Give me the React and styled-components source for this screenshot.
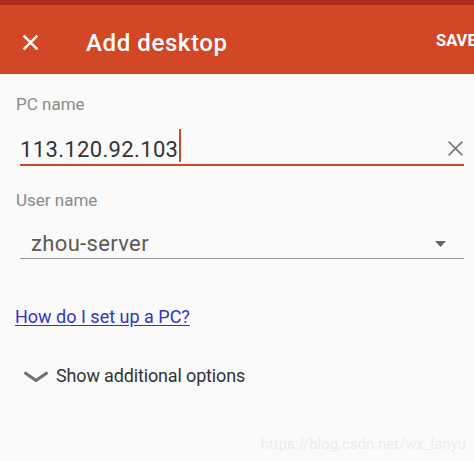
import React from "react";
import styled, { createGlobalStyle } from "styled-components";

const GlobalStyle = createGlobalStyle`
  html, body {
    margin: 0;
    padding: 0;
    background: #fafafa;
    font-family: Roboto, "Liberation Sans", Arial, sans-serif;
  }
`;

const Screen = styled.div`
  position: relative;
  width: 474px;
  height: 461px;
  overflow: hidden;
  background: #fafafa;
  display: flex;
  flex-direction: column;
`;

const StatusStrip = styled.div`
  height: 5px;
  background: #ad2d1c;
`;

const AppBar = styled.header`
  height: 69px;
  box-sizing: border-box;
  padding: 6px 0 0 22px;
  background: #d24726;
  display: flex;
  align-items: center;
  color: #fff;
`;

const IconButton = styled.button`
  border: 0;
  background: none;
  padding: 0;
  margin: 0 47px 0 0;
  display: flex;
  color: inherit;
  cursor: pointer;
  svg {
    display: block;
  }
`;

const Title = styled.h1`
  flex: 1;
  margin: 0;
  font-size: 24px;
  line-height: 28px;
  font-weight: 500;
  letter-spacing: 0.6px;
`;

const SaveBtn = styled.span`
  font-size: 16.5px;
  font-weight: 700;
  line-height: 20px;
  margin-top: -4px;
  white-space: nowrap;
  width: 38px;
  overflow: hidden;
`;

const Form = styled.div`
  display: flex;
  flex-direction: column;
  padding: 0 10px 0 16px;
`;

const Label = styled.label`
  font-size: 17px;
  line-height: 20px;
  color: #8a8a8a;
  margin-top: ${(p) => p.$top}px;
`;

const Field = styled.div`
  display: flex;
  align-items: center;
  margin: ${(p) => p.$top}px 0 0 4px;
  height: ${(p) => (p.$active ? 29 : 28)}px;
  padding-left: ${(p) => p.$indent || 0}px;
  border-bottom: ${(p) => (p.$active ? "2px solid #d24726" : "1.5px solid #9a9a9a")};
`;

const FieldText = styled.span`
  font-size: 22px;
  line-height: 28px;
  letter-spacing: 0.35px;
  color: ${(p) => p.$color};
`;

const Caret = styled.span`
  align-self: flex-start;
  width: 2px;
  height: 33px;
  margin: -6px 0 0 1px;
  background: #d24726;
`;

const Spacer = styled.span`
  flex: 1;
`;

const TrailingIcon = styled.span`
  display: flex;
  margin-right: ${(p) => p.$right}px;
  margin-top: ${(p) => p.$dy || 0}px;
`;

const HelpLink = styled.a`
  margin: 47px 0 0 -1px;
  font-size: 18px;
  line-height: 21px;
  color: #3434c4;
  text-decoration: underline;
  text-underline-offset: 2px;
  align-self: flex-start;
`;

const Expander = styled.div`
  display: flex;
  align-items: center;
  margin: 38px 0 0 7px;
  gap: 7px;
  color: #333;
  font-size: 18px;
  line-height: 22px;
  letter-spacing: -0.15px;
`;

const Watermark = styled.div`
  position: absolute;
  right: 8px;
  bottom: 8px;
  font-size: 14.5px;
  color: #ebebeb;
  letter-spacing: 0.2px;
`;

const CloseIcon = ({ size = 17, color = "#fff", width = 2.4 }) => (
  <svg width={size} height={size} viewBox="0 0 16 16">
    <path d="M1.5 1.5L14.5 14.5M14.5 1.5L1.5 14.5" stroke={color} strokeWidth={width} fill="none" />
  </svg>
);

export default function App() {
  return (
    <Screen>
      <GlobalStyle />
      <StatusStrip />
      <AppBar>
        <IconButton aria-label="close">
          <CloseIcon />
        </IconButton>
        <Title>Add desktop</Title>
        <SaveBtn>SAVE</SaveBtn>
      </AppBar>
      <Form>
        <Label $top={20}>PC name</Label>
        <Field $top={21} $active>
          <FieldText $color="#333">113.120.92.103</FieldText>
          <Caret />
          <Spacer />
          <TrailingIcon $right={0} $dy={-2}>
            <CloseIcon size={17} color="#7a7a7a" width={1.6} />
          </TrailingIcon>
        </Field>
        <Label $top={24}>User name</Label>
        <Field $top={20} $indent={11}>
          <FieldText $color="#5a5a5a">zhou-server</FieldText>
          <Spacer />
          <TrailingIcon $right={18}>
            <svg width="11" height="6" viewBox="0 0 11 6">
              <path d="M0 0H11L5.5 6Z" fill="#666" />
            </svg>
          </TrailingIcon>
        </Field>
        <HelpLink href="#">How do I set up a PC?</HelpLink>
        <Expander>
          <svg width="26" height="11" viewBox="0 0 26 11">
            <path d="M1.5 1.5L13 9.5L24.5 1.5" stroke="#707070" strokeWidth="3" fill="none" />
          </svg>
          <span>Show additional options</span>
        </Expander>
      </Form>
      <Watermark>https://blog.csdn.net/wx_lanyu</Watermark>
    </Screen>
  );
}
